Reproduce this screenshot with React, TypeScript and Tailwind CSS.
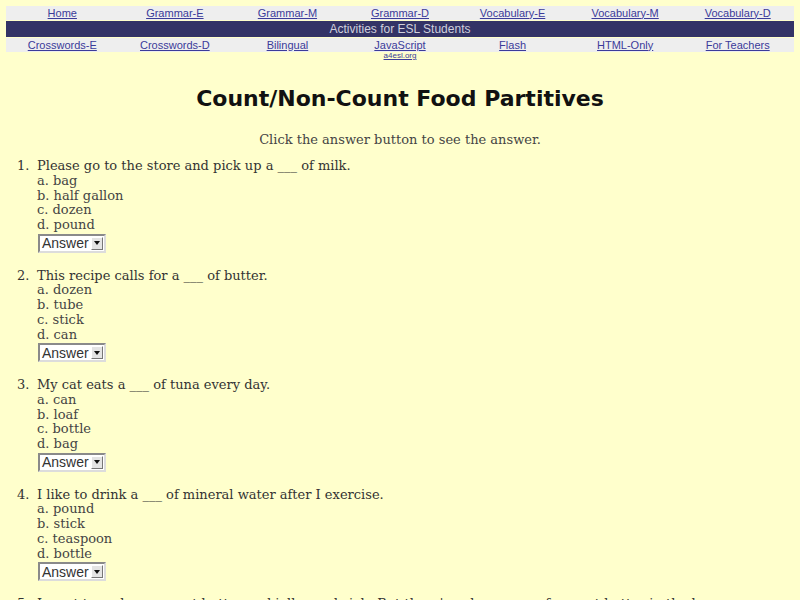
import React from 'react';

const topLinks = ['Home', 'Grammar-E', 'Grammar-M', 'Grammar-D', 'Vocabulary-E', 'Vocabulary-M', 'Vocabulary-D'];
const bottomLinks = ['Crosswords-E', 'Crosswords-D', 'Bilingual', 'JavaScript', 'Flash', 'HTML-Only', 'For Teachers'];

const questions = [
    { q: 'Please go to the store and pick up a ___ of milk.', opts: ['bag', 'half gallon', 'dozen', 'pound'] },
    { q: 'This recipe calls for a ___ of butter.', opts: ['dozen', 'tube', 'stick', 'can'] },
    { q: 'My cat eats a ___ of tuna every day.', opts: ['can', 'loaf', 'bottle', 'bag'] },
    { q: 'I like to drink a ___ of mineral water after I exercise.', opts: ['pound', 'stick', 'teaspoon', 'bottle'] },
    { q: "I want to make a peanut butter and jelly sandwich. But there's only one ___ of peanut butter in the house.", opts: ['jar', 'loaf', 'box', 'bag'] },
];

function AnswerBox() {
    return (
        <div className="flex items-center h-[19px] w-[68px] bg-white border-2 border-t-[#8a8a8a] border-l-[#8a8a8a] border-b-[#dcdcdc] border-r-[#dcdcdc]">
            <span className="flex-1 pl-[2px] text-[14px] leading-none text-[#333] font-['Liberation_Sans',Arial,sans-serif]">Answer</span>
            <span className="flex items-center justify-center w-[12px] h-[13px] mr-[1px] bg-[#e4e4e4] border border-t-white border-l-white border-b-[#777] border-r-[#777]">
                <svg width="6" height="4" viewBox="0 0 6 4"><path d="M0 0h6L3 4z" fill="#111" /></svg>
            </span>
        </div>
    );
}

export default function App() {
    return (
        <div className="bg-[#ffffcc] pt-[6px] px-[6px] overflow-hidden h-[600px]">
            <div className="font-['Liberation_Sans',Arial,sans-serif] text-[11px]">
                <div className="grid grid-cols-7 bg-[#eeeeee] h-[14px] items-center">
                    {topLinks.map((l) => (
                        <a key={l} className="text-center text-[#3b3b9a] underline leading-none">{l}</a>
                    ))}
                </div>
                <div className="bg-[#333366] mt-[1px] h-[16px] flex items-center justify-center text-[12px] text-[#d0d0dc] leading-none">
                    Activities for ESL Students
                </div>
                <div className="grid grid-cols-7 bg-[#eeeeee] mt-[1px] h-[14px] items-center">
                    {bottomLinks.map((l) => (
                        <a key={l} className="text-center text-[#3b3b9a] underline leading-none">{l}</a>
                    ))}
                </div>
                <div className="grid grid-cols-7 h-[10px]">
                    <span className="col-start-4 text-center text-[8px] text-[#3b3b9a] underline leading-none">a4esl.org</span>
                </div>
            </div>

            <h1 className="mt-[22px] text-center text-[22px] font-bold text-[#111] leading-[30px] font-['DejaVu_Sans',sans-serif]">
                Count/Non-Count Food Partitives
            </h1>

            <p className="mt-[18px] text-center text-[13px] text-[#444] leading-[15px] font-['DejaVu_Serif',serif]">
                Click the answer button to see the answer.
            </p>

            <ol className="mt-[12px] font-['DejaVu_Serif',serif] text-[13px] text-[#333] leading-[14.8px]">
                {questions.map((item, i) => (
                    <li key={i} className="flex h-[109.5px]">
                        <span className="w-[31px] pl-[11px] shrink-0">{i + 1}.</span>
                        <div>
                            <div className="whitespace-nowrap">{item.q}</div>
                            {item.opts.map((o, j) => (
                                <div key={o} className="text-[#444]">
                                    {String.fromCharCode(97 + j)}. {o}
                                </div>
                            ))}
                            <div className="mt-[1px] pl-[1px]">
                                <AnswerBox />
                            </div>
                        </div>
                    </li>
                ))}
            </ol>
        </div>
    );
}
